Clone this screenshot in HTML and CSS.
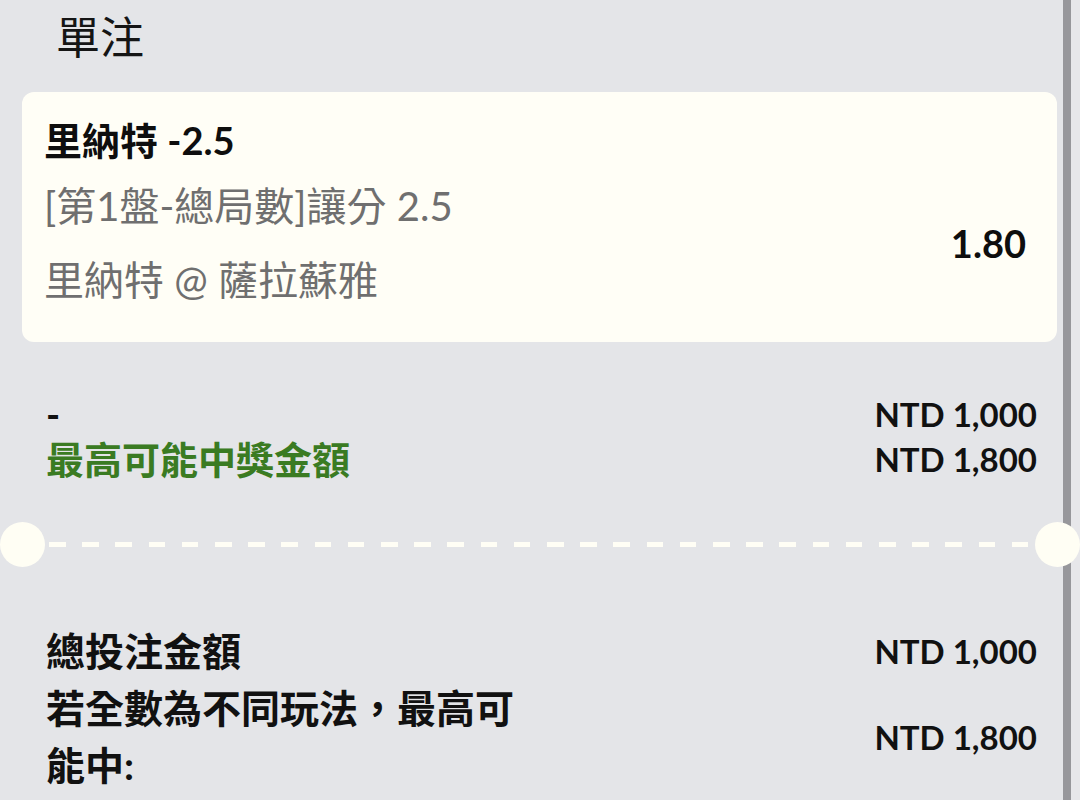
FILE: index.html
```html
<!DOCTYPE html>
<html lang="zh-Hant">
<head>
<meta charset="utf-8">
<title>單注</title>
<link rel="stylesheet" href="styles.css">
</head>
<body>
<div class="page">
  <main class="slip">
    <h1 class="slip-title">單注</h1>

    <section class="bet-card">
      <div class="bet-pick">里納特 -2.5</div>
      <div class="bet-detail">
        <div class="bet-info">
          <div class="bet-line">[第1盤-總局數]讓分 2.5</div>
          <div class="bet-line">里納特 @ 薩拉蘇雅</div>
        </div>
        <div class="bet-odds">1.80</div>
      </div>
    </section>

    <section class="stake-rows">
      <div class="row">
        <span class="row-label">-</span>
        <span class="row-value">NTD 1,000</span>
      </div>
      <div class="row">
        <span class="row-label green">最高可能中獎金額</span>
        <span class="row-value">NTD 1,800</span>
      </div>
    </section>

    <div class="divider">
      <span class="notch notch-left"></span>
      <span class="dash-line"></span>
      <span class="notch notch-right"></span>
    </div>

    <section class="summary">
      <div class="sum-row">
        <span class="sum-label">總投注金額</span>
        <span class="sum-value">NTD 1,000</span>
      </div>
      <div class="sum-row">
        <span class="sum-label">若全數為不同玩法，最高可能中:</span>
        <span class="sum-value">NTD 1,800</span>
      </div>
    </section>
  </main>
  <div class="scrollbar"></div>
  <div class="edge"></div>
</div>
</body>
</html>
```

FILE: styles.css
```css
* { box-sizing: border-box; }

html, body {
  margin: 0;
  padding: 0;
}

body {
  background: #e4e5e8;
  font-family: Lato, "Noto Sans CJK TC", "Noto Sans", sans-serif;
  color: #111111;
  width: 1080px;
  height: 800px;
  overflow: hidden;
}

.page {
  display: flex;
  height: 800px;
}

.slip {
  width: 1063px;
  flex: none;
  padding: 0 6px 0 22px;
}

.scrollbar {
  width: 8px;
  flex: none;
  background: #97979b;
}

.edge {
  flex: 1;
  background: #e7e7ea;
}

.slip-title {
  margin: 0;
  padding: 8px 0 0 34px;
  font-size: 44px;
  line-height: 59px;
  font-weight: 400;
  color: #151515;
}

.bet-card {
  margin-top: 25px;
  background: #fffef6;
  border-radius: 12px;
  padding: 26px 31px 37px 22px;
  height: 250px;
}

.bet-pick {
  font-size: 38px;
  line-height: 44px;
  font-weight: 700;
  color: #0e0e0e;
}

.bet-detail {
  margin-top: 19px;
  display: flex;
  align-items: center;
  justify-content: space-between;
}

.bet-info {
  display: flex;
  flex-direction: column;
  gap: 24px;
}

.bet-line {
  font-size: 40px;
  line-height: 50px;
  color: #6f6f6f;
}

.bet-odds {
  font-size: 38px;
  line-height: 50px;
  font-weight: 700;
  color: #0e0e0e;
}

.stake-rows {
  margin-top: 50px;
  padding: 0 20px 0 24px;
}

.row {
  display: flex;
  justify-content: space-between;
  align-items: center;
  height: 45px;
}

.row-label {
  font-size: 38px;
  line-height: 45px;
  font-weight: 700;
}

.row-label.green {
  color: #3a7b22;
}

.row-value {
  font-size: 33px;
  line-height: 45px;
  font-weight: 700;
}

.divider {
  position: relative;
  margin-top: 40px;
  height: 45px;
  display: flex;
  align-items: center;
}

.dash-line {
  display: block;
  margin: 0 27px;
  flex: 1;
  height: 5px;
  background: repeating-linear-gradient(to right, #fffef5 0 16.6px, transparent 16.6px 33.2px);
}

.notch {
  position: absolute;
  top: 0;
  width: 45px;
  height: 45px;
  border-radius: 50%;
  background: #fffef4;
  z-index: 2;
}

.notch-left { left: -22.5px; }
.notch-right { right: -22.5px; }

.summary {
  margin-top: 56px;
  padding: 0 20px 0 24px;
}

.sum-row {
  display: flex;
  justify-content: space-between;
  align-items: center;
}

.sum-label {
  width: 480px;
  font-size: 39px;
  line-height: 57px;
  font-weight: 700;
}

.sum-value {
  font-size: 33px;
  line-height: 57px;
  font-weight: 700;
}
```
